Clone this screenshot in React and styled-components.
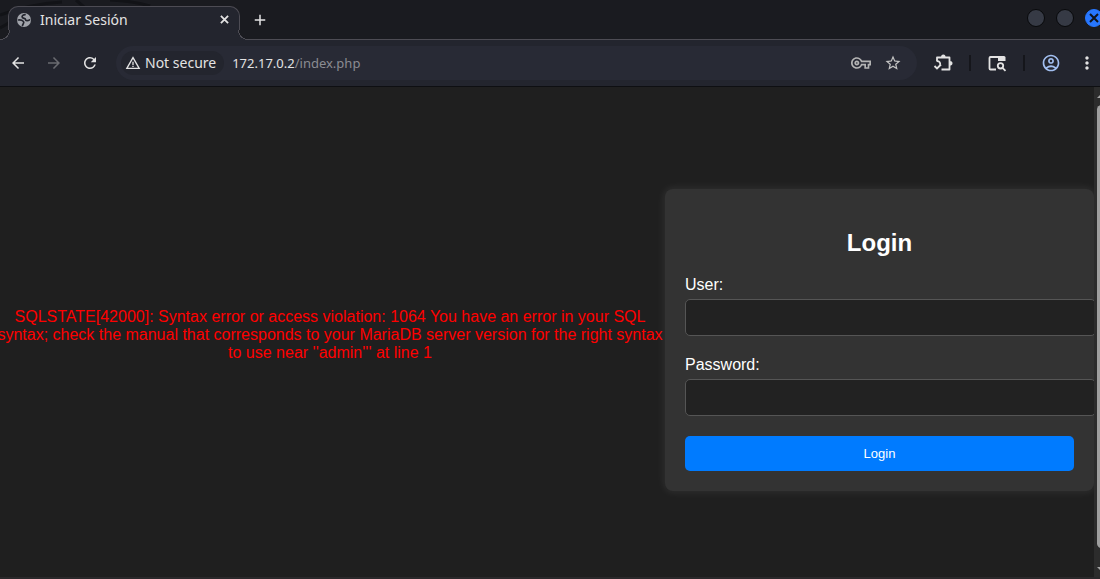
import React from "react";
import styled, { createGlobalStyle } from "styled-components";
import {
  MdArrowBack,
  MdArrowForward,
  MdRefresh,
  MdWarningAmber,
  MdOutlineVpnKey,
  MdStarBorder,
  MdOutlineAccountCircle,
  MdMoreVert,
  MdAdd,
} from "react-icons/md";

const c = {
  strip: "#1a1b20",
  toolbar: "#23252e",
  omnibox: "#282a35",
  line: "#4d4c54",
  icon: "#e3e3e3",
  page: "#1f1f1f",
};

const GlobalStyle = createGlobalStyle`
  body {
    margin: 0;
    background: ${c.page};
  }
`;

const Browser = styled.div`
  display: flex;
  flex-direction: column;
  min-height: 100vh;
  overflow: hidden;
  font-family: "Noto Sans", sans-serif;
`;

const TabStrip = styled.header`
  display: grid;
  grid-template-columns: 1fr auto;
  height: 40px;
  box-sizing: border-box;
  border-bottom: 1px solid ${c.line};
  background: ${c.strip};
`;

const Tabs = styled.div`
  display: flex;
  align-items: flex-end;
  gap: 10px;
  padding-left: 8px;
  position: relative;
`;

const Wallpaper = styled.svg`
  position: absolute;
  left: 0;
  top: 0;
`;

const Tab = styled.div`
  position: relative;
  display: flex;
  align-items: center;
  gap: 8px;
  width: 232px;
  height: 34px;
  box-sizing: border-box;
  margin-bottom: -1px;
  padding: 0 8px 8px 7px;
  border: 1px solid ${c.line};
  border-bottom: 0;
  border-radius: 10px 10px 0 0;
  background: ${c.toolbar};
  color: ${c.icon};
  font-size: 14px;
  line-height: 20px;

  &::before,
  &::after {
    content: "";
    position: absolute;
    bottom: 0;
    width: 10px;
    height: 10px;
  }
  &::before {
    right: 100%;
    margin-right: -1px;
    background: radial-gradient(circle at 0 0, ${c.strip} 9px, ${c.line} 9px 10px, ${c.toolbar} 10px);
  }
  &::after {
    left: 100%;
    margin-left: -1px;
    background: radial-gradient(circle at 100% 0, ${c.strip} 9px, ${c.line} 9px 10px, ${c.toolbar} 10px);
  }
`;

const TabTitle = styled.span`
  flex: 1;
  white-space: nowrap;
`;

const IconButton = styled.button`
  display: grid;
  place-items: center;
  flex: none;
  width: ${(p) => p.$size || 20}px;
  height: ${(p) => p.$size || 20}px;
  padding: 0;
  border: 0;
  background: none;
  color: ${(p) => p.$color || c.icon};
`;

const NewTab = styled(IconButton)`
  margin-bottom: 9px;
`;

const WindowControls = styled.div`
  display: flex;
  gap: 11px;
  padding-top: 9px;
  margin-right: -3px;
`;

const WindowButton = styled.button`
  display: grid;
  place-items: center;
  width: 18px;
  height: 18px;
  box-sizing: border-box;
  padding: 0;
  border: 1px solid ${(p) => (p.$close ? "#2777ff" : "#08090b")};
  border-radius: 50%;
  background: ${(p) => (p.$close ? "#2777ff" : "#363a45")};
  color: #10131a;
`;

const Toolbar = styled.nav`
  display: flex;
  align-items: center;
  height: 47px;
  box-sizing: border-box;
  padding: 0 3px 0 8px;
  border-bottom: 1px solid #0e0f12;
  background: ${c.toolbar};
`;

const NavButtons = styled.div`
  display: flex;
  gap: 16px;
  margin-right: 16px;
`;

const Omnibox = styled.div`
  display: flex;
  flex: 1;
  align-items: center;
  height: 34px;
  box-sizing: border-box;
  padding: 0 14px 0 5px;
  border-radius: 17px;
  background: ${c.omnibox};
`;

const SecurityChip = styled.button`
  display: flex;
  align-items: center;
  gap: 4px;
  height: 24px;
  padding: 0 8px 0 4px;
  border: 0;
  border-radius: 12px;
  background: ${c.toolbar};
  color: ${c.icon};
  font: 14px/20px "Noto Sans", sans-serif;
  white-space: nowrap;
`;

const Address = styled.div`
  flex: 1;
  padding-left: 8px;
  color: #8b8c92;
  font-size: 13px;
  line-height: 20px;
`;

const Host = styled.span`
  color: ${c.icon};
`;

const OmniboxActions = styled.div`
  display: flex;
  gap: 12px;
`;

const ToolbarActions = styled.div`
  display: flex;
  align-items: center;
  gap: 16px;
  padding-left: 16px;
`;

const Divider = styled.span`
  width: 2px;
  height: 16px;
  background: #15161b;
`;

const Viewport = styled.div`
  display: flex;
  flex: 1;
  border-bottom: 2px solid #2b292b;
`;

const Page = styled.main`
  display: flex;
  flex: 1;
  align-items: center;
  min-width: 0;
  padding-top: 16px;
  overflow: hidden;
  background: ${c.page};
  color: #fff;
  font: 16px/18px "Liberation Sans", Arial, sans-serif;
`;

const ErrorText = styled.p`
  flex: 1;
  margin: 0 0 10px -5px;
  color: #f00;
  text-align: center;
`;

const Card = styled.form`
  flex: 0 1 429px;
  box-sizing: border-box;
  min-width: 280px;
  padding: 20px;
  border-radius: 8px;
  background: #333;
  box-shadow: 0 0 10px rgba(255, 255, 255, 0.1);
`;

const Heading = styled.h2`
  margin: 20px 0;
  font-size: 24px;
  line-height: 27px;
  text-align: center;
`;

const Field = styled.div`
  margin-bottom: 20px;
`;

const Label = styled.label`
  display: block;
  margin-bottom: 5px;
`;

const TextBox = styled.input`
  display: block;
  width: 100%;
  height: 15px;
  padding: 10px;
  border: 1px solid #555;
  border-radius: 5px;
  background: #222;
  color: #fff;
`;

const Submit = styled.button`
  display: block;
  width: 100%;
  padding: 10px;
  border: 0;
  border-radius: 5px;
  background: #007bff;
  color: #fff;
  font: 13px/15px "Liberation Sans", Arial, sans-serif;
`;

const Scrollbar = styled.div`
  display: flex;
  flex-direction: column;
  align-items: flex-start;
  width: 6px;
  box-sizing: border-box;
  padding: 7px 0 6px 3px;
  overflow: hidden;
  background: #2c2c2c;
`;

const Thumb = styled.div`
  flex: 1;
  width: 9px;
  margin: 7px 0 19px;
  border-radius: 5px;
  background: #9f9f9f;
`;

const Arrow = styled.svg`
  flex: none;
  display: block;
`;

function GlobeIcon() {
  return (
    <svg width="16" height="16" viewBox="0 0 16 16">
      <circle cx="8" cy="8" r="7" fill="#a1a4ab" />
      <path
        d="M9 2.600C6.500 3 5.500 4.500 6.500 5.600S9.500 6 9.500 7.500S12 9 13.500 7.800M2.400 8C4 7.800 6.500 8.500 7.500 9.500S7 12 6.500 13.400"
        fill="none"
        stroke={c.toolbar}
        strokeWidth="1.700"
        strokeLinecap="round"
      />
    </svg>
  );
}

function CrossIcon({ size }) {
  return (
    <svg width={size} height={size} viewBox="0 0 10 10" stroke="currentColor" strokeWidth="2">
      <path d="M1 1l8 8M9 1l-8 8" />
    </svg>
  );
}

function ExtensionIcon() {
  return (
    <svg width="20" height="20" viewBox="0 0 20 20" fill="none" stroke="currentColor" strokeWidth="1.800">
      <path d="M4 8.500V4.500H16.500V16.500H8.500" strokeLinejoin="round" />
      <path d="M8 4.500a2.300 3 0 0 1 4.600 0zM16.500 8a3 2.300 0 0 1 0 4.600z" fill="currentColor" stroke="none" />
      <path d="M4 8.200c2.600 0 3.600 1.500 3 3.600M1.500 13l2.500 2.500L8 11.500" />
    </svg>
  );
}

function PanelSearchIcon() {
  return (
    <svg width="20" height="20" viewBox="0 0 20 20" fill="none" stroke="currentColor" strokeWidth="1.800">
      <path d="M9 16.500H3.500a1 1 0 0 1-1-1V5a1 1 0 0 1 1-1H17" />
      <path d="M11 3h6a1.500 1.500 0 0 1 1.500 1.500V8H11z" fill="currentColor" stroke="none" />
      <circle cx="13.500" cy="12.800" r="2.700" />
      <path d="M15.500 14.800l3 3" />
    </svg>
  );
}

export default function App() {
  return (
    <Browser>
      <GlobalStyle />
      <TabStrip>
        <Tabs>
          <Wallpaper width="240" height="38" fill="none" stroke="#121317" strokeWidth="3" aria-hidden="true">
            <path d="M0 15Q30 4 62 2M0 28Q8 24 12 20M76 0l8 7M110 0q24 1 40 6" />
          </Wallpaper>
          <Tab>
            <GlobeIcon />
            <TabTitle>Iniciar Sesión</TabTitle>
            <IconButton $size={14} aria-label="Close tab">
              <CrossIcon size={9} />
            </IconButton>
          </Tab>
          <NewTab aria-label="New tab">
            <MdAdd size={18} />
          </NewTab>
        </Tabs>
        <WindowControls>
          <WindowButton aria-label="Minimize" />
          <WindowButton aria-label="Maximize" />
          <WindowButton $close aria-label="Close">
            <CrossIcon size={10} />
          </WindowButton>
        </WindowControls>
      </TabStrip>
      <Toolbar>
        <NavButtons>
          <IconButton aria-label="Back"><MdArrowBack size={18} /></IconButton>
          <IconButton $color="#6a6b70" aria-label="Forward"><MdArrowForward size={18} /></IconButton>
          <IconButton aria-label="Reload"><MdRefresh size={18} /></IconButton>
        </NavButtons>
        <Omnibox>
          <SecurityChip>
            <MdWarningAmber size={16} />
            Not secure
          </SecurityChip>
          <Address>
            <Host>172.17.0.2</Host>/index.php
          </Address>
          <OmniboxActions>
            <IconButton $color="#b4b4b4" aria-label="Passwords"><MdOutlineVpnKey size={20} /></IconButton>
            <IconButton $color="#c4c4c4" aria-label="Bookmark"><MdStarBorder size={18} /></IconButton>
          </OmniboxActions>
        </Omnibox>
        <ToolbarActions>
          <IconButton aria-label="Extensions"><ExtensionIcon /></IconButton>
          <Divider />
          <IconButton aria-label="Side panel"><PanelSearchIcon /></IconButton>
          <Divider />
          <IconButton $color="#a2bff0" aria-label="Profile"><MdOutlineAccountCircle size={20} /></IconButton>
          <IconButton aria-label="Menu"><MdMoreVert size={20} /></IconButton>
        </ToolbarActions>
      </Toolbar>
      <Viewport>
        <Page>
          <ErrorText>
            SQLSTATE[42000]: Syntax error or access violation: 1064 You have an error in your SQL
            syntax; check the manual that corresponds to your MariaDB server version for the right
            syntax to use near ''admin''' at line 1
          </ErrorText>
          <Card onSubmit={(e) => e.preventDefault()}>
            <Heading>Login</Heading>
            <Field>
              <Label htmlFor="user">User:</Label>
              <TextBox id="user" type="text" />
            </Field>
            <Field>
              <Label htmlFor="password">Password:</Label>
              <TextBox id="password" type="password" />
            </Field>
            <Submit type="submit">Login</Submit>
          </Card>
        </Page>
        <Scrollbar aria-hidden="true">
          <Arrow width="9" height="4" fill="#a5a5a5"><path d="M0 4L4 0L9 4z" /></Arrow>
          <Thumb />
          <Arrow width="9" height="4" fill="#a5a5a5"><path d="M0 0H9L4 4z" /></Arrow>
        </Scrollbar>
      </Viewport>
    </Browser>
  );
}
